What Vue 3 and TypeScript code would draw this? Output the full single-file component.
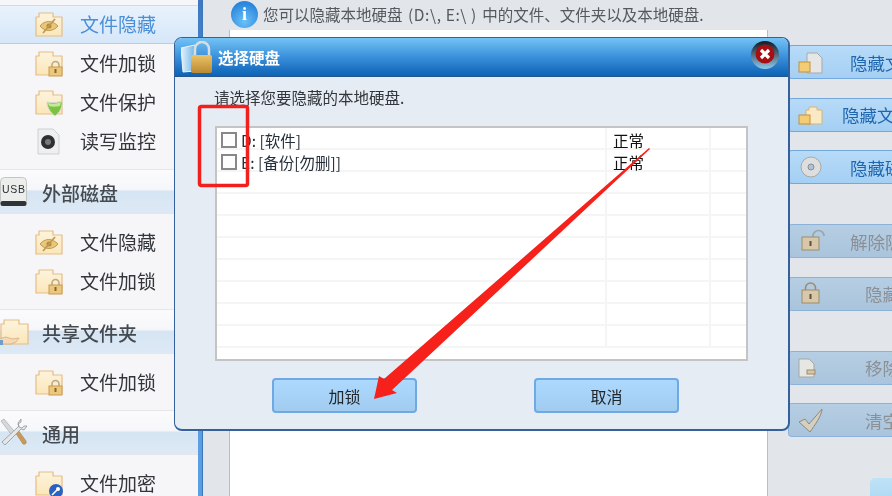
<script setup lang="ts">
type SideItem = { label: string; icon: string; active?: boolean }
type SideGroup = { title?: string; icon?: string; items: SideItem[] }
type RightBtn = { label: string; icon: string; indent: number; off?: boolean }

const groups: SideGroup[] = [
  {
    items: [
      { label: '文件隐藏', icon: 'eye', active: true },
      { label: '文件加锁', icon: 'lock' },
      { label: '文件保护', icon: 'shield' },
      { label: '读写监控', icon: 'monitor' },
    ],
  },
  {
    title: '外部磁盘',
    icon: 'usb',
    items: [
      { label: '文件隐藏', icon: 'eye' },
      { label: '文件加锁', icon: 'lock' },
    ],
  },
  { title: '共享文件夹', icon: 'share', items: [{ label: '文件加锁', icon: 'lock' }] },
  { title: '通用', icon: 'tools', items: [{ label: '文件加密', icon: 'key' }] },
]

const rightGroups: RightBtn[][] = [
  [
    { label: '隐藏文件', icon: 'file', indent: 22 },
    { label: '隐藏文件夹', icon: 'folder', indent: 14 },
    { label: '隐藏磁盘', icon: 'disc', indent: 22 },
  ],
  [
    { label: '解除隐藏', icon: 'unlock', indent: 22, off: true },
    { label: '隐藏', icon: 'padlock', indent: 37, off: true },
  ],
  [
    { label: '移除', icon: 'remove', indent: 37, off: true },
    { label: '清空', icon: 'check', indent: 37, off: true },
  ],
]

const rows = [
  { name: 'D: [软件]', state: '正常' },
  { name: 'E: [备份[勿删]]', state: '正常' },
  { name: '', state: '' },
  { name: '', state: '' },
  { name: '', state: '' },
  { name: '', state: '' },
  { name: '', state: '' },
  { name: '', state: '' },
  { name: '', state: '' },
  { name: '', state: '' },
]
</script>

<template>
  <div class="page">
    <aside class="side">
      <section v-for="(g, i) in groups" :key="i" class="side-group">
        <header v-if="g.title" class="side-head">
          <svg class="head-icon" viewBox="0 0 28 30">
            <template v-if="g.icon === 'usb'">
              <rect x="0.500" y="0.500" width="26" height="28" rx="4" fill="#eceeec" stroke="#c2c6c4" />
              <rect x="0.500" y="24" width="26" height="5" rx="2" fill="#2f3334" />
              <text x="2" y="16" font-size="10.500" textLength="23" fill="#2b2e30" font-family="Liberation Sans, sans-serif">USB</text>
            </template>
            <template v-else-if="g.icon === 'share'">
              <path d="M1 7h3V3h15v4h9v20H1z" fill="url(#folderFill)" stroke="#e4bd85" stroke-width="1.200" />
              <path d="M-2 22l8-2 6 2 7-1-3 4-5 2H-2z" fill="#f6d8b4" stroke="#cfa67c" stroke-width=".7" />
              <rect x="-1" y="23" width="4" height="5" fill="#6d9fc9" />
            </template>
            <template v-else>
              <path d="M1 3l3-2 10 12 2 2-3 3-2-2z" fill="#d5d9dc" stroke="#9aa1a6" stroke-width=".6" />
              <path d="M15 14l3-2 8 11c1 2-1 4-3 3z" fill="#c79a5b" stroke="#a77c40" stroke-width=".6" />
              <path d="M21 1l-3 4 1 3L2 24l3 3L21 11l3 1 3-4-3 0-2 2-3-1-1-3 3-2z" fill="#e4e7ea" stroke="#8f979d" stroke-width=".8" />
            </template>
          </svg>
          <span class="head-text">{{ g.title }}</span>
        </header>
        <ul class="side-list">
          <li v-for="item in g.items" :key="item.label" class="side-item" :class="{ active: item.active }">
            <svg class="item-icon" viewBox="0 0 28 28">
              <template v-if="item.icon === 'monitor'">
                <path d="M3 1h15l6 6v19H3z" fill="#eeeff0" stroke="#ccd0d2" />
                <circle cx="13" cy="14" r="7" fill="#2e2f30" />
                <circle cx="13" cy="14" r="3" fill="#77797a" />
              </template>
              <template v-else>
                <path d="M1 6h3V2h14v4h9v19H1z" fill="url(#folderFill)" stroke="#e4bd85" stroke-width="1.200" stroke-linejoin="round" />
                <template v-if="item.icon === 'eye'">
                  <path d="M5 15c5-6 12-6 18 0-5 6-13 6-18 0z" fill="#e9c679" stroke="#c09a52" />
                  <circle cx="14" cy="15" r="2.500" fill="#b08a40" />
                  <path d="M8 22L20 8" stroke="#c09a52" stroke-width="1.800" />
                </template>
                <template v-else-if="item.icon === 'lock'">
                  <path d="M17 17v-2a3.500 3.500 0 0 1 7 0v2" fill="none" stroke="#b9a98a" stroke-width="1.600" />
                  <rect x="14" y="17" width="13" height="9" fill="#ecc77e" stroke="#c89c50" />
                  <rect x="19.500" y="19" width="2" height="4" fill="#8a6424" />
                </template>
                <template v-else-if="item.icon === 'shield'">
                  <path d="M12 13c4 1 10 1 15-1 1 7-3 12-7 15-4-3-8-8-8-14z" fill="#7cc243" stroke="#d6dcd6" />
                  <path d="M13 14c4 1 9 1 13-1l-1 4c-4 1-8 1-11 0z" fill="#c9e79a" />
                </template>
                <template v-else>
                  <circle cx="21" cy="21" r="7" fill="#2b62c0" />
                  <circle cx="23" cy="19" r="2" fill="#fff" />
                  <path d="M22 20l-5 5" stroke="#fff" stroke-width="1.600" />
                </template>
              </template>
            </svg>
            <span class="item-text">{{ item.label }}</span>
          </li>
        </ul>
      </section>
    </aside>

    <div class="divider"></div>

    <main class="main">
      <div class="info">
        <span class="info-icon">i</span>
        <span class="info-text">您可以隐藏本地硬盘 <span class="info-path">(D:\, E:\ )</span> 中的文件、文件夹以及本地硬盘.</span>
      </div>
      <div class="content">
        <div class="gutter"></div>
        <div class="panel"></div>
        <div class="right">
          <div v-for="(grp, gi) in rightGroups" :key="gi" class="right-group">
            <button v-for="b in grp" :key="b.icon" class="right-btn" :class="{ off: b.off }">
              <svg class="right-icon" viewBox="0 0 30 30">
                <template v-if="b.icon === 'file'">
                  <path d="M9 6h10l5 5v15H9z" fill="#e6e6e6" stroke="#a9a9a9" />
                  <rect x="1" y="15" width="11" height="10" fill="#f3cc74" stroke="#c6913a" />
                </template>
                <template v-else-if="b.icon === 'folder'">
                  <path d="M8 10h3V7h8v3h5v14H8z" fill="#fbe9c4" stroke="#d8b377" />
                  <rect x="1" y="15" width="11" height="9" fill="#f3cc74" stroke="#c6913a" />
                </template>
                <template v-else-if="b.icon === 'disc'">
                  <circle cx="13" cy="15" r="10" fill="#dedede" stroke="#a8a8a8" />
                  <circle cx="13" cy="15" r="3" fill="#a9c3de" stroke="#8d8d8d" />
                </template>
                <template v-else-if="b.icon === 'unlock'">
                  <path d="M15 11V10a5 5 0 0 1 11 0" fill="none" stroke="#9aa4aa" stroke-width="1.600" />
                  <rect x="4" y="11" width="17" height="13" fill="#d8c7a8" stroke="#9c8d70" />
                  <rect x="11.500" y="15" width="2" height="5" fill="#5e5339" />
                </template>
                <template v-else-if="b.icon === 'padlock'">
                  <path d="M7.500 11V9a5 5 0 0 1 10 0v2" fill="none" stroke="#9c8d70" stroke-width="1.600" />
                  <rect x="4" y="11" width="17" height="13" fill="#d8c7a8" stroke="#9c8d70" />
                  <rect x="11.500" y="15" width="2" height="5" fill="#5e5339" />
                </template>
                <template v-else-if="b.icon === 'remove'">
                  <path d="M1 6h10l5 5v13H1z" fill="#e6e6e2" stroke="#a8a8a2" />
                  <rect x="9" y="17" width="8" height="4" fill="#d8c7a8" stroke="#9c8d70" />
                </template>
                <template v-else>
                  <path d="M1 17l6-3 4 5L24 4c0 6-7 16-12 23z" fill="#d4cfc0" stroke="#8f8a78" />
                </template>
              </svg>
              <span :style="{ marginLeft: b.indent + 'px' }">{{ b.label }}</span>
            </button>
          </div>
        </div>
      </div>
      <div class="corner"></div>
    </main>

    <div class="dialog">
      <div class="dlg-title">
        <svg class="dlg-icon" viewBox="0 0 32 32">
          <path d="M0 7l14-3v26l-12 1z" fill="url(#glassFill)" stroke="#e9f5fb" />
          <path d="M14 15V8a7 7 0 0 1 14 0v7" fill="none" stroke="#d8dee0" stroke-width="2.500" />
          <rect x="10" y="14" width="21" height="18" rx="2" fill="url(#lockFill)" />
        </svg>
        <span class="dlg-name">选择硬盘</span>
        <span class="dlg-close">
          <svg viewBox="0 0 30 30" width="30" height="30">
            <circle cx="15" cy="15" r="14" fill="url(#closeRing)" />
            <circle cx="15" cy="14" r="9.500" fill="#a80f14" />
            <path d="M11 10l8 8M19 10l-8 8" stroke="#fff" stroke-width="3.200" />
          </svg>
        </span>
      </div>
      <div class="dlg-body">
        <p class="dlg-tip">请选择您要隐藏的本地硬盘.</p>
        <div class="disk-list">
          <div v-for="(r, i) in rows" :key="i" class="disk-row">
            <div class="cell-name">
              <span v-if="r.name" class="box"></span>
              <span>{{ r.name }}</span>
            </div>
            <div class="cell-state">{{ r.state }}</div>
            <div class="cell-end"></div>
          </div>
        </div>
        <div class="dlg-actions">
          <button class="dlg-btn">加锁</button>
          <button class="dlg-btn">取消</button>
        </div>
      </div>
    </div>

    <svg class="overlay" viewBox="0 0 892 496" width="892" height="496">
      <defs>
        <linearGradient id="folderFill" x1="0" y1="0" x2="0" y2="1">
          <stop offset="0" stop-color="#fdf4de" />
          <stop offset="1" stop-color="#fbe6b8" />
        </linearGradient>
        <linearGradient id="lockFill" x1="0" y1="0" x2="0" y2="1">
          <stop offset="0" stop-color="#ebc266" />
          <stop offset="1" stop-color="#b98a34" />
        </linearGradient>
        <linearGradient id="glassFill" x1="0" y1="0" x2="1" y2="0">
          <stop offset="0" stop-color="#e6f3fb" />
          <stop offset="1" stop-color="#6db4e6" />
        </linearGradient>
        <linearGradient id="closeRing" x1="0" y1="0" x2="0" y2="1">
          <stop offset="0" stop-color="#14181c" />
          <stop offset="1" stop-color="#8fc8ea" />
        </linearGradient>
      </defs>
      <rect x="199.500" y="106.500" width="48" height="79" rx="2" fill="none" stroke="#f2201c" stroke-width="3.500" />
      <polygon points="374,399 379,376 384,379 649,148 650,149 392,390 397,393" fill="#f5211a" />
    </svg>
  </div>
</template>

<style>
body {
  margin: 0;
}
</style>

<style scoped>
.page {
  position: relative;
  display: flex;
  width: 892px;
  height: 496px;
  overflow: hidden;
  background: #e2e5ea;
  font-family: "Noto Sans CJK SC", "Liberation Sans", sans-serif;
  filter: blur(0.35px);
}

.side {
  width: 198px;
  flex: none;
  padding-top: 5px;
  box-sizing: border-box;
  background: #f6f6f9;
}

.side-head {
  display: flex;
  align-items: center;
  height: 45px;
  box-sizing: border-box;
  border-top: 1px solid #e6e6e8;
  border-bottom: 1px solid #e4e6ea;
  background: linear-gradient(#fbfbfd 0%, #f6f7fa 45%, #d6e5f3 50%, #dde9f5 100%);
}

.head-icon {
  width: 28px;
  height: 30px;
  flex: none;
  overflow: visible;
}

.head-text {
  margin-left: 14px;
  padding-top: 2px;
  font-size: 19px;
  font-weight: 500;
  color: #454a50;
}

.side-list {
  list-style: none;
  margin: 0;
  padding: 0;
}

.side-head + .side-list {
  padding: 9px 0 8px;
}

.side-group:first-child .side-list {
  padding-bottom: 8px;
}

.side-item {
  display: flex;
  align-items: center;
  height: 39px;
  box-sizing: border-box;
  padding-left: 35px;
  font-size: 19px;
  color: #33363a;
}

.item-text {
  padding-bottom: 2px;
}

.side-item.active {
  color: #4a8fd8;
  border-top: 1px solid #c9dcf0;
  border-bottom: 1px solid #b3cee8;
  background: linear-gradient(#e8f2fc, #d6e7f9);
}

.item-icon {
  width: 28px;
  height: 28px;
  flex: none;
  margin-right: 17px;
}

.divider {
  width: 5px;
  flex: none;
  background: linear-gradient(#3f78c0, #5b9fe2 40%);
  border-right: 1px solid #3b76bb;
  box-sizing: border-box;
}

.main {
  position: relative;
  display: flex;
  flex: 1;
  flex-direction: column;
  min-width: 0;
}

.info {
  display: flex;
  align-items: center;
  height: 28px;
  flex: none;
  padding-left: 28px;
  gap: 5px;
  color: #555a60;
  font-size: 15.500px;
  white-space: nowrap;
}

.info-path {
  padding: 0 2px;
  letter-spacing: 0.6px;
}

.info-icon {
  width: 27px;
  height: 27px;
  border-radius: 50%;
  background: radial-gradient(circle at 50% 75%, #6cc1f7, #2a86dc 75%);
  color: #fff;
  font: bold 18px/27px "Liberation Serif", serif;
  text-align: center;
}

.content {
  display: flex;
  flex: 1;
  margin-top: 2px;
}

.gutter {
  width: 26px;
  flex: none;
}

.panel {
  width: 537px;
  flex: none;
  background: #fff;
  border-left: 1px solid #bdbdbd;
  border-right: 1px solid #bdbdbd;
}

.right {
  display: flex;
  flex-direction: column;
  gap: 40px;
  margin-left: 20px;
  padding-top: 15px;
}

.right-group {
  display: flex;
  flex-direction: column;
  gap: 18.500px;
}

.right-btn {
  display: flex;
  align-items: center;
  width: 200px;
  height: 34px;
  padding: 0 0 0 9px;
  box-sizing: border-box;
  border: 1px solid #72a8dc;
  border-right: 0;
  border-radius: 4px 0 0 4px;
  background: linear-gradient(#b7dbf8, #a5cff3);
  color: #1f66ae;
  font: 17.500px "Noto Sans CJK SC", sans-serif;
  text-align: left;
  white-space: nowrap;
}

.right-btn.off {
  border-color: #8db2da;
  background: linear-gradient(#b6cee3, #a9c4dc);
  color: #8b9096;
}

.right-icon {
  width: 30px;
  height: 30px;
  flex: none;
}

.corner {
  position: absolute;
  left: 667px;
  top: 478px;
  width: 40px;
  height: 30px;
  border-radius: 5px;
  background: linear-gradient(#bfe2f6, #a9d6f2);
}

.dialog {
  position: absolute;
  left: 174px;
  top: 37px;
  width: 616px;
  height: 394px;
  box-sizing: border-box;
  border: 1px solid #34619c;
  border-width: 1px 2px 2px 1px;
  border-radius: 8px;
  overflow: hidden;
  background: #e5ecf4;
}

.dlg-title {
  position: relative;
  display: flex;
  align-items: center;
  height: 39px;
  box-sizing: border-box;
  padding-left: 6px;
  border-bottom: 1px solid #27568f;
  background: linear-gradient(#74c3f6, #3a90da 50%, #0c62b4);
}

.dlg-icon {
  width: 32px;
  height: 32px;
  flex: none;
}

.dlg-name {
  margin-left: 5px;
  color: #fff;
  font-size: 15.500px;
  font-weight: 700;
}

.dlg-close {
  position: absolute;
  right: 8px;
  top: 2px;
  width: 30px;
  height: 30px;
}

.dlg-body {
  padding: 9px 0 0 40px;
}

.dlg-tip {
  margin: 0 0 18px -1px;
  color: #33363a;
  font-size: 15.500px;
  line-height: 22px;
}

.disk-list {
  width: 533px;
  height: 235px;
  box-sizing: border-box;
  overflow: hidden;
  border: 2px solid #c4c4c4;
  background: #fff;
}

.disk-row {
  display: flex;
  height: 22px;
  box-sizing: border-box;
  border-bottom: 2px solid #f5f5f5;
  font-size: 15.500px;
  line-height: 21px;
  color: #26303c;
}

.cell-name {
  display: flex;
  align-items: center;
  width: 390px;
  box-sizing: border-box;
  padding: 4px 0 0 4px;
  gap: 4px;
  border-right: 2px solid #f5f5f5;
}

.box {
  width: 16px;
  height: 16px;
  flex: none;
  box-sizing: border-box;
  border: 2.500px solid #888;
  background: #fdfdfd;
}

.cell-state {
  width: 104px;
  box-sizing: border-box;
  padding: 2px 0 0 6px;
  border-right: 2px solid #f5f5f5;
  color: #111;
}

.dlg-actions {
  display: flex;
  gap: 117px;
  margin: 17px 0 0 57px;
}

.dlg-btn {
  width: 145px;
  height: 35px;
  box-sizing: border-box;
  border: 2px solid #6fa9e4;
  border-radius: 4px;
  background: linear-gradient(#aed9ff, #a1ccf0);
  color: #22262a;
  font: 16px "Noto Sans CJK SC", sans-serif;
}

.overlay {
  position: absolute;
  left: 0;
  top: 0;
  pointer-events: none;
}
</style>
